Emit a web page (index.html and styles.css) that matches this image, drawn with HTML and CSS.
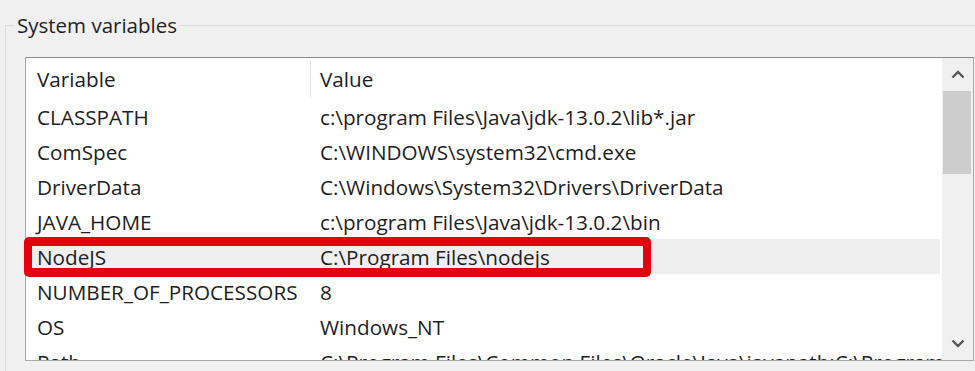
FILE: index.html
```html
<!DOCTYPE html>
<html>
<head>
<meta charset="utf-8">
<link rel="stylesheet" href="styles.css">
</head>
<body>
<fieldset class="group">
  <legend class="group-label">System variables</legend>
  <div class="listbox">
    <div class="list">
      <div class="header">
        <div class="hcell hcell-name">Variable</div>
        <div class="hsep"></div>
        <div class="hcell hcell-value">Value</div>
      </div>
      <div class="row"><div class="cell name">CLASSPATH</div><div class="cell value">c:\program Files\Java\jdk-13.0.2\lib*.jar</div></div>
      <div class="row"><div class="cell name">ComSpec</div><div class="cell value">C:\WINDOWS\system32\cmd.exe</div></div>
      <div class="row"><div class="cell name">DriverData</div><div class="cell value">C:\Windows\System32\Drivers\DriverData</div></div>
      <div class="row"><div class="cell name">JAVA_HOME</div><div class="cell value">c:\program Files\Java\jdk-13.0.2\bin</div></div>
      <div class="row row-hover"><div class="cell name">NodeJS</div><div class="cell value">C:\Program Files\nodejs</div></div>
      <div class="row"><div class="cell name">NUMBER_OF_PROCESSORS</div><div class="cell value">8</div></div>
      <div class="row"><div class="cell name">OS</div><div class="cell value">Windows_NT</div></div>
      <div class="row"><div class="cell name">Path</div><div class="cell value">C:\Program Files\Common Files\Oracle\Java\javapath;C:\Program Files (x86)\Common Files</div></div>
    </div>
    <div class="scrollbar">
      <div class="sb-btn">
        <svg width="14" height="9" viewBox="0 0 14 9"><path d="M1.5 7.5 L7 2 L12.5 7.5" fill="none" stroke="#555" stroke-width="2.4"/></svg>
      </div>
      <div class="sb-thumb"></div>
      <div class="sb-track"></div>
      <div class="sb-btn">
        <svg width="14" height="9" viewBox="0 0 14 9"><path d="M1.5 1.5 L7 7 L12.5 1.5" fill="none" stroke="#555" stroke-width="2.4"/></svg>
      </div>
    </div>
    <div class="highlight"></div>
  </div>
</fieldset>
</body>
</html>
```

FILE: styles.css
```css
html, body {
  margin: 0;
  padding: 0;
  background: #f0f0f0;
  overflow: hidden;
}
body {
  font-family: "Open Sans", "Noto Sans", sans-serif;
  font-size: 20.7px;
  color: #1e1e1e;
  height: 371px;
}
.group {
  margin: 11px 0 0 5px;
  padding: 0 0 20px 19px;
  border: none;
  border-top: 1px solid #dcdcdc;
  border-left: 1px solid #dcdcdc;
  min-width: 0;
}
.group-label {
  margin-left: -11px;
  padding: 0 3px;
  line-height: 28px;
  font-size: 20.5px;
  color: #1e1e1e;
}
.listbox {
  position: relative;
  margin-top: 18px;
  width: 947px;
  height: 302px;
  border: 1px solid #a8a8a8;
  border-top-color: #8a8a8a;
  background: #fff;
  display: flex;
}
.list {
  width: 916px;
  overflow: hidden;
}
.header {
  display: flex;
  height: 41px;
  align-items: stretch;
}
.hcell {
  display: flex;
  align-items: center;
  white-space: nowrap;
}
.hcell-name {
  width: 273px;
  padding-left: 11px;
}
.hsep {
  width: 1px;
  margin: 3px 0 2px;
  background: #e3e3e3;
}
.hcell-value {
  padding-left: 9px;
}
.row {
  display: flex;
  height: 35px;
  align-items: center;
  white-space: nowrap;
  width: 914px;
}
.row-hover {
  background: #efefef;
}
.cell.name {
  width: 273px;
  padding-left: 11px;
  flex: none;
}
.cell.value {
  padding-left: 10px;
}
.scrollbar {
  width: 31px;
  background: #f0f0f0;
  display: flex;
  flex-direction: column;
  flex: none;
}
.sb-btn {
  height: 33px;
  display: flex;
  align-items: center;
  justify-content: center;
  flex: none;
}
.sb-thumb {
  height: 83px;
  margin: 0 2px 0 1px;
  background: #cdcdcd;
  flex: none;
}
.sb-track {
  flex: 1;
}
.highlight {
  position: absolute;
  left: -2px;
  top: 179px;
  width: 611px;
  height: 22px;
  border: 9px solid #e3000f;
  border-left-width: 8px;
  border-right-width: 8px;
  border-radius: 5px;
}
```
